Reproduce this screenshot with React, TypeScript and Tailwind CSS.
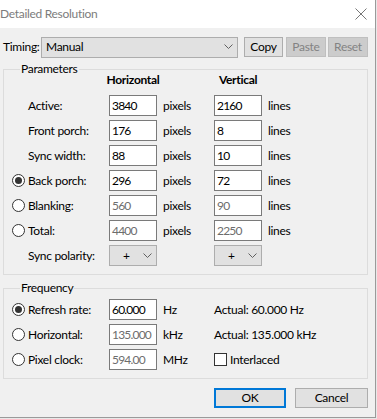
import type { ReactNode } from "react"

function Chevron() {
  return (
    <svg width="9" height="6" viewBox="0 0 9 6" className="shrink-0">
      <polyline points="0.5,0.5 4.5,4.5 8.5,0.5" fill="none" stroke="#606060" strokeWidth="1" />
    </svg>
  )
}

function Radio({ checked }: { checked?: boolean }) {
  return (
    <span className="flex h-[13px] w-[13px] shrink-0 items-center justify-center rounded-full border border-[#333] bg-white">
      {checked && <span className="h-[7px] w-[7px] rounded-full bg-[#333]" />}
    </span>
  )
}

function TextBox({ value, disabled }: { value: string; disabled?: boolean }) {
  return (
    <div
      className={
        "flex h-[21px] w-[48px] items-center overflow-hidden border border-[#7a7a7a] bg-white pl-[2px] tracking-[-0.8px] " +
        (disabled ? "text-[#6d6d6d]" : "text-black")
      }
    >
      {value}
    </div>
  )
}

function Combo({ value, width, textPad }: { value: string; width: string; textPad: string }) {
  return (
    <div className={`flex h-[21px] items-center justify-between border border-[#adadad] bg-[#e1e1e1] pr-[4px] ${width} ${textPad}`}>
      <span>{value}</span>
      <Chevron />
    </div>
  )
}

function Button({
  children,
  className,
  disabled,
}: {
  children: ReactNode
  className: string
  disabled?: boolean
}) {
  return (
    <div
      className={
        "flex h-[20px] items-center justify-center " +
        (disabled
          ? "border border-[#bfbfbf] bg-[#cccccc] text-[#838383] "
          : "border border-[#adadad] bg-[#e1e1e1] text-black ") +
        className
      }
    >
      {children}
    </div>
  )
}

function Label({ text, radio, checked }: { text: string; radio?: boolean; checked?: boolean }) {
  if (radio) {
    return (
      <div className="flex h-[21px] items-center gap-[3px]">
        <Radio checked={checked} />
        <span>{text}</span>
      </div>
    )
  }
  return <div className="flex h-[21px] items-center pl-[16px]">{text}</div>
}

function Unit({ text }: { text: string }) {
  return <div className="flex h-[21px] items-center pl-[6px]">{text}</div>
}

const params = [
  { label: "Active:", h: "3840", v: "2160" },
  { label: "Front porch:", h: "176", v: "8" },
  { label: "Sync width:", h: "88", v: "10" },
  { label: "Back porch:", h: "296", v: "72", radio: true, checked: true },
  { label: "Blanking:", h: "560", v: "90", radio: true, disabled: true },
  { label: "Total:", h: "4400", v: "2250", radio: true, disabled: true },
]

export default function App() {
  return (
    <div className="h-[419px] w-[377px] bg-[#e8e8e8] font-['Segoe_UI',Lato,sans-serif] text-[12px] leading-[14px] tracking-[-0.3px] text-black">
      <div className="flex h-[418px] w-[376px] flex-col border-r border-b border-[#9a9a9a]">
        {/* title bar */}
        <div className="flex h-[28px] shrink-0 items-center justify-between bg-white">
          <span className="text-[#7c7c7c]">Detailed Resolution</span>
          <svg width="12" height="12" viewBox="0 0 12 12" className="mr-[8px]">
            <path d="M0.5 0.5L11.5 11.5M11.5 0.5L0.5 11.5" stroke="#777" strokeWidth="1" />
          </svg>
        </div>

        <div className="flex flex-1 flex-col bg-[#f0f0f0] pl-[3px]">
          {/* timing row */}
          <div className="mt-[9px] flex h-[20px] items-center">
            <span className="w-[38px]">Timing:</span>
            <Combo value="Manual" width="w-[197px]" textPad="pl-[4px]" />
            <Button className="ml-[6px] w-[39px]">Copy</Button>
            <Button className="ml-[3px] w-[40px]" disabled>
              Paste
            </Button>
            <Button className="ml-[2px] w-[40px]" disabled>
              Reset
            </Button>
          </div>

          {/* parameters */}
          <fieldset className="mt-[5px] w-[365px] border border-[#dcdcdc] pb-[8px] pl-[8px]">
            <legend className="ml-[8px] px-[1px] leading-[14px]">Parameters</legend>
            <div className="-mt-[3px] grid grid-cols-[97px_48px_57px_48px_auto] gap-y-[4px]">
              <div className="col-start-2 flex h-[14px] justify-center whitespace-nowrap font-bold">Horizontal</div>
              <div className="col-start-4 flex h-[14px] justify-center whitespace-nowrap font-bold">Vertical</div>
              <div className="col-span-5 -mt-[2px] h-0" />
              {params.map((p) => (
                <div key={p.label} className="contents">
                  <Label text={p.label} radio={p.radio} checked={p.checked} />
                  <TextBox value={p.h} disabled={p.disabled} />
                  <Unit text="pixels" />
                  <TextBox value={p.v} disabled={p.disabled} />
                  <Unit text="lines" />
                </div>
              ))}
              <Label text="Sync polarity:" />
              <Combo value="+" width="w-[48px]" textPad="pl-[13px]" />
              <div />
              <Combo value="+" width="w-[48px]" textPad="pl-[13px]" />
              <div />
            </div>
          </fieldset>

          {/* frequency */}
          <fieldset className="mt-[6px] w-[365px] border border-[#dcdcdc] pb-[8px] pl-[8px]">
            <legend className="ml-[8px] px-[1px] leading-[14px]">Frequency</legend>
            <div className="mt-[4px] grid grid-cols-[97px_48px_57px_auto] gap-y-[4px]">
              <Label text="Refresh rate:" radio checked />
              <TextBox value="60.000" />
              <Unit text="Hz" />
              <div className="flex h-[21px] items-center">Actual: 60.000 Hz</div>

              <Label text="Horizontal:" radio />
              <TextBox value="135.000" disabled />
              <Unit text="kHz" />
              <div className="flex h-[21px] items-center">Actual: 135.000 kHz</div>

              <Label text="Pixel clock:" radio />
              <TextBox value="594.00" disabled />
              <Unit text="MHz" />
              <div className="flex h-[21px] items-center gap-[3px]">
                <span className="h-[13px] w-[13px] border border-[#333] bg-white" />
                <span>Interlaced</span>
              </div>
            </div>
          </fieldset>

          {/* buttons */}
          <div className="mt-[9px] flex">
            <div className="ml-[211px] flex h-[20px] w-[72px] items-center justify-center border-2 border-[#0078d7] bg-[#e1e1e1]">
              OK
            </div>
            <Button className="ml-[9px] w-[73px]">Cancel</Button>
          </div>
        </div>
      </div>
    </div>
  )
}
